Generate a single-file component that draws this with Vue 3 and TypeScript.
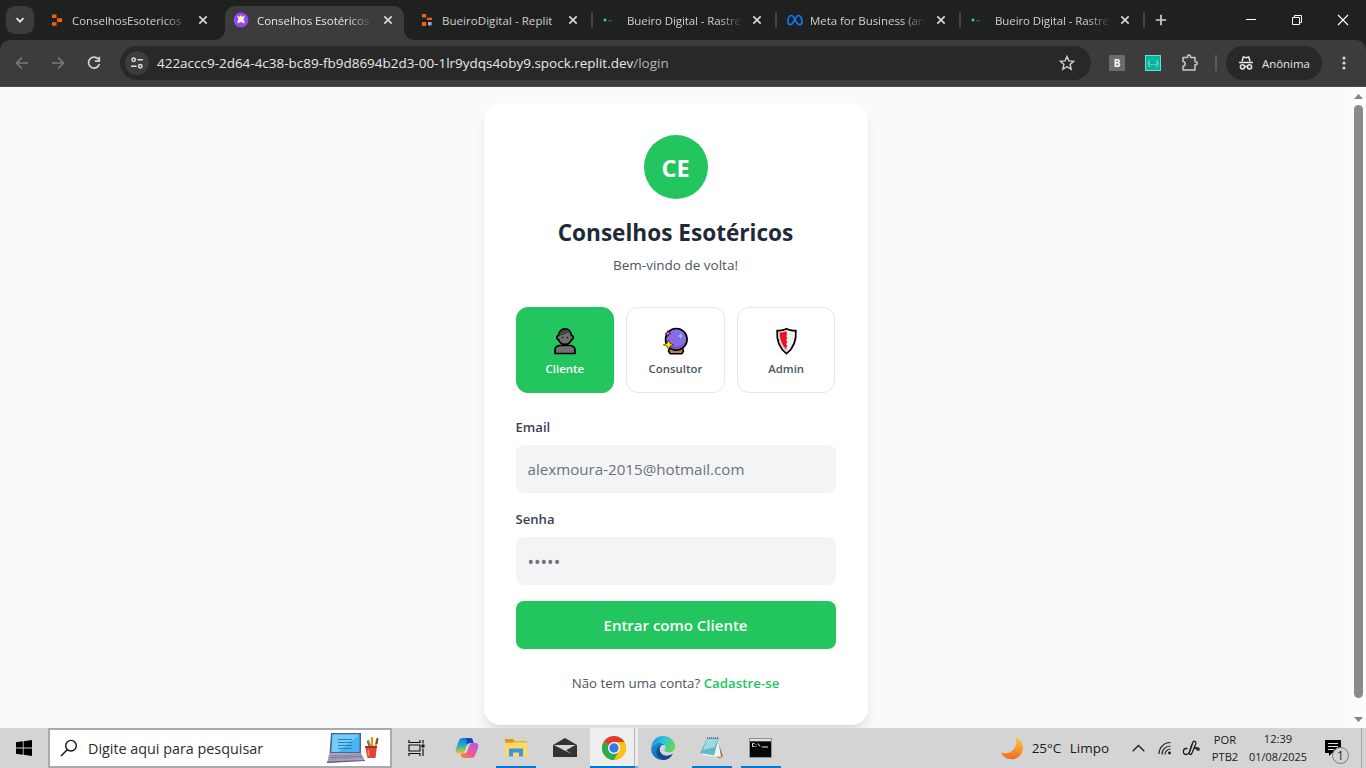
<script setup lang="ts">
import { ref } from 'vue'

type Favicon = 'replit' | 'mystic' | 'replit-app' | 'terminal' | 'meta'

interface Tab {
  title: string
  icon: Favicon
  active?: boolean
  divider?: boolean
}

const tabs: Tab[] = [
  { title: 'ConselhosEsotericos -', icon: 'replit' },
  { title: 'Conselhos Esotéricos', icon: 'mystic', active: true },
  { title: 'BueiroDigital - Replit', icon: 'replit-app', divider: true },
  { title: 'Bueiro Digital - Rastre', icon: 'terminal', divider: true },
  { title: 'Meta for Business (an', icon: 'meta', divider: true },
  { title: 'Bueiro Digital - Rastre', icon: 'terminal', divider: true },
]

const roles = ['Cliente', 'Consultor', 'Admin']
const role = ref('Cliente')
</script>

<template>
  <div class="screen">
    <header class="tabstrip">
      <div class="tab-search">
        <svg width="12" height="12" viewBox="0 0 12 12"><path d="M2.5 4.2 6 7.7l3.5-3.5" fill="none" stroke="#e6e6e6" stroke-width="1.8" /></svg>
      </div>
      <div v-for="(tab, i) in tabs" :key="i" class="tab" :class="[tab.icon, { active: tab.active, divider: tab.divider }]">
        <svg v-if="tab.icon === 'replit'" class="fav" viewBox="0 0 16 16">
          <path d="M3 2.500h4.500v3.500H3zM8 6.300h5v3.600H8zM3 10.200h4.500v3.600H3z" fill="#f26207" />
        </svg>
        <svg v-else-if="tab.icon === 'mystic'" class="fav" viewBox="0 0 16 16">
          <circle cx="8" cy="8" r="7.400" fill="#9747f0" />
          <path d="m8 3 1.200 1.800 2.600-1-1.200 3.200 1.300 4.500L8 9.900l-3.900 1.600L5.400 7 4.200 3.800l2.600 1z" fill="#fff0c2" />
        </svg>
        <svg v-else-if="tab.icon === 'replit-app'" class="fav" viewBox="0 0 16 16">
          <path d="M3 2h4.200v3.600H3zM8 5.800h5v2.200H8zM3 10h4.200v4H3z" fill="#f26207" />
          <rect x="9" y="10" width="3.6" height="3.4" fill="#a99cf5" />
        </svg>
        <svg v-else-if="tab.icon === 'terminal'" class="fav" viewBox="0 0 16 16">
          <circle cx="5" cy="8" r="1.500" fill="#35d46c" />
          <rect x="8" y="8" width="4" height="1.400" fill="#285c3b" />
        </svg>
        <svg v-else class="fav" viewBox="0 0 16 16">
          <path d="M.9 10.200C.9 6.500 2.400 3.500 4.400 3.500c3.200 0 4.500 9.100 8.100 9.100 1.800 0 2.500-1 2.500-2.700 0-3.500-1.600-6.400-3.500-6.400-3.100 0-4.900 9.100-8 9.100-1.700 0-2.600-1-2.600-2.400z" fill="none" stroke="#0a7cf7" stroke-width="1.700" />
        </svg>
        <span class="tab-title">{{ tab.title }}</span>
        <svg class="tab-close" width="10" height="10" viewBox="0 0 10 10"><path d="m1.300 1.300 7.400 7.400m0-7.400L1.300 8.700" stroke="#d6d6d6" stroke-width="1.700" /></svg>
      </div>
      <svg class="new-tab" width="12" height="12" viewBox="0 0 12 12"><path d="M6 .8v10.400M.8 6h10.400" stroke="#cfcfcf" stroke-width="1.700" /></svg>
      <div class="window-buttons">
        <svg width="12" height="12" viewBox="0 0 12 12"><path d="M1 5.500h10" stroke="#fff" /></svg>
        <svg width="12" height="12" viewBox="0 0 12 12"><path d="M1.500 3.500h7v7h-7zM3.500 3.500v-2h7v7h-2" fill="none" stroke="#fff" /></svg>
        <svg width="12" height="12" viewBox="0 0 12 12"><path d="m1 1 10 10M11 1 1 11" stroke="#fff" stroke-width="1.200" /></svg>
      </div>
    </header>

    <div class="toolbar-bed">
      <div class="toolbar">
        <svg class="nav dim" viewBox="0 0 16 16"><path d="M14 8H3m5-5.500L2.500 8 8 13.500" /></svg>
        <svg class="nav dim" viewBox="0 0 16 16"><path d="M2 8h11M8 2.500 13.500 8 8 13.500" /></svg>
        <svg class="nav" viewBox="0 0 16 16"><path d="M12.700 4.600A5.500 5.500 0 1 0 13.400 9M13.300 1.800v4.400H8.800" /></svg>
        <div class="omnibox">
          <span class="site-info">
            <svg width="14" height="14" viewBox="0 0 14 14" fill="none" stroke="#dedede" stroke-width="1.500"><circle cx="3.700" cy="3.800" r="1.700" /><path d="M7.500 3.800H13M1 10.200h5.500" /><circle cx="10.300" cy="10.200" r="1.700" /></svg>
          </span>
          <span class="url">422accc9-2d64-4c38-bc89-fb9d8694b2d3-00-1lr9ydqs4oby9.spock.replit.dev<span class="path">/login</span></span>
          <svg class="bookmark" width="16" height="16" viewBox="0 0 16 16"><path d="m8 1.500 1.900 4.400 4.800.4-3.600 3.200 1.100 4.700L8 11.700l-4.200 2.500 1.100-4.700L1.300 6.300l4.800-.4z" fill="none" stroke="#cfcfcf" stroke-width="1.400" /></svg>
        </div>
        <span class="ext ext-b">B</span>
        <span class="ext ext-json">{...}</span>
        <svg class="puzzle" width="18" height="18" viewBox="0 0 18 18"><path d="M2 3.500h4.500v-1a1.500 1.500 0 0 1 3 0v1H14v4.200h.7a1.500 1.500 0 0 1 0 3H14v5.300H2v-3.800c2.900-.2 2.900-4.600 0-4.800z" fill="none" stroke="#cbcbcb" stroke-width="1.500" stroke-linejoin="round" /></svg>
        <span class="bar"></span>
        <div class="incognito">
          <svg width="16" height="16" viewBox="0 0 16 16" fill="none" stroke="#e6e6e6" stroke-width="1.500"><path d="M4 6.300 5.300 2l2.700.8 2.700-.8L12 6.300M1 7.500h14" /><circle cx="4.500" cy="11.800" r="2.100" /><circle cx="11.500" cy="11.800" r="2.100" /><path d="M6.600 11.500h2.800" /></svg>
          <span>Anônima</span>
        </div>
        <svg class="menu" width="4" height="16" viewBox="0 0 4 16" fill="#d5d5d5"><circle cx="2" cy="3" r="1.600" /><circle cx="2" cy="8" r="1.600" /><circle cx="2" cy="13" r="1.600" /></svg>
      </div>
    </div>

    <div class="viewport">
      <main class="page">
        <section class="card">
          <div class="logo">CE</div>
          <h1>Conselhos Esotéricos</h1>
          <p class="welcome">Bem-vindo de volta!</p>
          <div class="roles">
            <button v-for="r in roles" :key="r" type="button" class="role" :class="{ selected: role === r }" @click="role = r">
              <svg v-if="r === 'Cliente'" class="emoji" viewBox="0 0 29 29">
                <path d="M5 26.500v-3c0-3.300 2-5 5.500-5h9c3.500 0 5.500 1.700 5.500 5v3z" fill="#6f6f6f" stroke="#000" stroke-width="1.700" />
                <path d="M8.700 8.500c0-4 2.600-6.600 6.300-6.600s6.300 2.600 6.300 6.600c2.600.2 2.600 3.900 0 4.200-.9 3-3.200 4.700-6.300 4.700s-5.400-1.700-6.300-4.700c-2.600-.3-2.600-4 0-4.200z" fill="#6f6f6f" stroke="#000" stroke-width="1.600" />
                <path d="M9.500 8.500c0-3.500 2.200-5.700 5.500-5.700 3 0 5.300 1.900 5.500 4.800L18 5.500 13 8z" fill="#434343" />
                <circle cx="12.600" cy="10.500" r=".8" /><circle cx="17.400" cy="10.500" r=".8" />
              </svg>
              <svg v-else-if="r === 'Consultor'" class="emoji" viewBox="0 0 29 29">
                <path d="M8.500 21h13l1 3.200-1.500 2.500H9l-1.500-2.500z" fill="#b77b51" stroke="#000" stroke-width="1.600" stroke-linejoin="round" />
                <circle cx="15.300" cy="12.300" r="10.800" fill="#886ce4" stroke="#000" stroke-width="1.600" />
                <path d="M6.500 17.500c4 3.200 13 3.500 18-2.700-1.400 5-5 7.500-9.400 7.500-3.600 0-7-1.600-8.600-4.800z" fill="#7358c4" />
                <path d="m19.500 6 .8 2.200 2.200.8-2.200.8-.8 2.200-.8-2.200-2.200-.8 2.200-.8z" fill="#62e5ff" />
                <path d="m7 3.500.7 2.200 2 .8-2 .8L7 9.500l-.8-2.200-2-.8 2-.8z" fill="#ff8abf" stroke="#27152d" stroke-width=".8" />
                <path d="m7.500 13 1.500 3.400 3.700 1.400L9 19.200l-1.500 3.400L6 19.200l-3.700-1.400L6 16.400z" fill="#ffe500" stroke="#221a00" stroke-width=".6" />
              </svg>
              <svg v-else class="emoji" viewBox="0 0 29 29">
                <path d="M14.500 1.700c2 1.200 5 1.900 9.300 2 .8 9.500-2.300 17.400-9.300 23-7-5.600-10.100-13.500-9.300-23 4.300-.1 7.300-.8 9.300-2z" fill="#efefef" stroke="#000" stroke-width="1.700" />
                <path d="M14.500 3c-2 1.200-4.500 1.700-8.100 1.900-.3 8.300 2 14.800 8.100 20.300z" fill="#d1d1d1" />
                <path d="M14.500 4c-2 1-3.900 1.500-6.800 1.800.1 7 2.200 12.200 6.800 16.700v-2.500l.9-1-.9-1v-2l.9-1-.9-1v-2l.9-1-.9-1v-2l.9-1-.9-1z" fill="#e81224" />
              </svg>
              <span>{{ r }}</span>
            </button>
          </div>
          <label>Email</label>
          <input class="email" type="text" placeholder="alexmoura-2015@hotmail.com" />
          <label>Senha</label>
          <input class="password" type="text" placeholder="•••••" />
          <button type="button" class="submit">Entrar como {{ role }}</button>
          <p class="signup"><span>Não tem uma conta?</span> <a>Cadastre-se</a></p>
        </section>
      </main>
      <div class="scrollbar">
        <svg width="9" height="5" viewBox="0 0 9 5"><path d="M4.500 0 9 5H0z" fill="#858585" /></svg>
        <i></i>
        <svg width="9" height="5" viewBox="0 0 9 5"><path d="M4.500 5 9 0H0z" fill="#858585" /></svg>
      </div>
    </div>

    <footer class="taskbar">
      <div class="start">
        <svg width="16" height="16" viewBox="0 0 16 16"><path d="M0 2.300 6.800 1.300v6.300H0zM7.600 1.200 16 0v7.600H7.600zM0 8.400h6.800v6.300L0 13.700zM7.600 8.400H16V16l-8.400-1.200z" /></svg>
      </div>
      <div class="search">
        <svg class="lens" width="18" height="18" viewBox="0 0 18 18" fill="none" stroke="#111" stroke-width="1.400"><circle cx="11" cy="6.700" r="5.300" /><path d="M7.200 10.700 1 17" /></svg>
        <span>Digite aqui para pesquisar</span>
        <svg class="laptop" width="54" height="32" viewBox="0 0 54 32">
          <path d="M5 1h30v20.500H3.500z" fill="#50648a" /><path d="M6.500 2.500h27v17.500H5.500z" fill="#48b4f4" /><path d="M6.500 2.500h27L12 20H5.500z" fill="#73cdfb" />
          <path d="M12 7.500h14M12 10.500h14M12 13.500h14M12 16.500h14" stroke="#2e7fba" />
          <path d="m3 22 32-1 4 7.500L1 31z" fill="#aaa2bd" /><path d="m4 23.500 30-1 2 3.500-33 1.500z" fill="#746e94" /><path d="m1 29.500 38-1.500v1L1 31z" fill="#655d80" />
          <path d="m4.500 24.500 29-1M3.500 26.500l31-1" stroke="#c7c1d4" stroke-dasharray="2 1" />
          <path d="m42 8 3 8M46 5v11m5-8-2 8" stroke="#d99b31" stroke-width="2.200" /><path d="m41.500 9 2 6" stroke="#248578" stroke-width="1.500" /><path d="m51.500 6-1 6" stroke="#884a1b" stroke-width="2" />
          <path d="M39 14h12l-1.500 12h-8z" fill="#e24538" /><path d="M39 14h12l-.4 2H39.500z" fill="#b82b29" /><path d="M42.500 17.500V24" stroke="#ff8270" stroke-width="1.500" />
        </svg>
      </div>
      <div class="app taskview">
        <svg width="17" height="16" viewBox="0 0 17 16" fill="none" stroke="#111" stroke-width="1.200"><path d="M1 0v2.500h11V0M1 5h11v6H1zM1 16v-2.500h11V16M15 0v3.500M15 8.500V16" /><path d="M13.500 6h3" stroke-width="3" /></svg>
      </div>
      <div class="app">
        <svg width="24" height="22" viewBox="0 0 24 22">
          <defs>
            <linearGradient id="copA" x1="0" y1="0" x2="0" y2="1"><stop offset="0" stop-color="#1675df" /><stop offset=".45" stop-color="#17b1c2" /><stop offset="1" stop-color="#e5cc20" /></linearGradient>
            <linearGradient id="copB" x1="1" y1="0" x2="0" y2="1"><stop offset="0" stop-color="#a45ef4" /><stop offset=".55" stop-color="#ef5790" /><stop offset="1" stop-color="#fb873c" /></linearGradient>
          </defs>
          <path d="M8 1h7c2 0 2.500 1 3 3l.6 2H15c-2 0-2.800 1-3.500 3l-2 5.500C9 16 8 16.500 6 16.500H4c-3 0-4-2-3-5L4 3.500C5 1.700 6 1 8 1z" fill="url(#copA)" />
          <path d="M11 1h4c2 0 2.500 1 3 3l.6 2H15c-1.500 0-2.500.8-3 2z" fill="#1548bf" />
          <path d="M16 21H9c-2 0-2.500-1-3-3l-.5-1.500H9c2 0 2.800-1 3.500-3l2-5.500c.5-1.500 1.500-2 3.500-2h2c3 0 4 2 3 5l-3 7.500c-1 1.800-2 2.500-4 2.500z" fill="url(#copB)" />
        </svg>
      </div>
      <div class="app open">
        <svg width="22" height="20" viewBox="0 0 22 20"><path d="M0 1h8l2 2h12v15H0z" fill="#eab02c" /><path d="M0 4.500h22V18H0z" fill="#ffd966" /><path d="M0 1h8l1.500 2L8 4.500H0z" fill="#d99b18" /><path d="M4 18.500v-8h14v8h-4v-4H8v4z" fill="#3996dc" /></svg>
      </div>
      <div class="app">
        <svg width="24" height="20" viewBox="0 0 24 20"><path d="M0 7 12 0l12 7v12H0z" fill="#333" /><path d="M1 7h21.500L13 12.200l6 3.800L10.500 12z" fill="#d6d6d6" /></svg>
      </div>
      <div class="app open current">
        <svg width="24" height="24" viewBox="0 0 24 24"><circle cx="12" cy="12" r="12" fill="#fbc116" /><path d="M12 12 1.600 6A12 12 0 0 1 22.400 6z" fill="#e33b2e" /><path d="M1.600 6A12 12 0 0 0 12 24l5.200-9z" fill="#2da94f" /><path d="M12 6h10.400A12 12 0 0 1 12 24l5.200-9z" fill="#fbc116" /><circle cx="12" cy="12" r="6" fill="#fff" /><circle cx="12" cy="12" r="4.700" fill="#3478e5" /></svg>
      </div>
      <div class="app">
        <svg width="24" height="24" viewBox="0 0 24 24">
          <defs>
            <linearGradient id="edgeT" x1="0" y1="0" x2="1" y2=".4"><stop offset="0" stop-color="#1689d5" /><stop offset=".55" stop-color="#31c5dc" /><stop offset="1" stop-color="#60d75a" /></linearGradient>
            <linearGradient id="edgeB" x1="0" y1="0" x2="1" y2="1"><stop offset="0" stop-color="#1692dd" /><stop offset="1" stop-color="#1450a0" /></linearGradient>
          </defs>
          <path d="M.3 11C1 4.500 6 0 12 0c7 0 12 5 12 10.500 0 3.500-2.500 5.800-6 5.800-2.500 0-4.600-.8-4.600-2 0-.8 1.100-1.300 1.100-3C14.500 8.500 11.500 7 8.500 7 4.500 7 1.500 8.500.3 11z" fill="url(#edgeT)" />
          <path d="M.2 12C1 9 4.500 7 8.500 7c2.300 0 4.300.8 5.200 2.300C10.500 8.500 8.500 10.500 8.500 13c0 4.500 4.500 8 9.500 6.500 1.500-.5 2.800-1 3.800-1.500C19.500 22 16 24 12 24 5.400 24-.4 19 .2 12z" fill="url(#edgeB)" />
          <path d="M8.500 13c0 4.500 4.500 8 9.500 6.500 1.500-.5 2.800-1 3.800-1.500-2 3.500-5 5.500-8.800 6C8 23 5.500 19.500 5.500 16c0-3 1.500-5.500 5-6.500-1.300.8-2 2-2 3.500z" fill="#114a8b" />
        </svg>
      </div>
      <div class="app open">
        <svg width="24" height="22" viewBox="0 0 24 22"><path d="m17 2 6 17-3 2.500-4-2z" fill="#9b784c" /><path d="m7 1 11 1 3 18-19-2z" fill="#eef5f5" /><path d="M7 1h12l-5 17.500L0 16z" fill="#67b8c6" /><path d="M7 2h11l-3 8L3 13z" fill="#9ed9df" /><path d="M7 1h12" stroke="#51666b" stroke-width="1.500" stroke-dasharray="1 1" /></svg>
      </div>
      <div class="app open">
        <svg width="23" height="20" viewBox="0 0 23 20"><path d="M0 0h23v20H0z" fill="#8e9499" /><path d="M1 1h21v2H1z" fill="#d6e0e7" /><path d="M1 3.500h21V19H1z" fill="#050505" /><path d="M5.500 5.500H3.500v3h2M7 6v.8M7 8v.8M9 5.500l2 3M13 9h6" fill="none" stroke="#e5e5e5" /></svg>
      </div>

      <div class="tray">
        <svg width="24" height="24" viewBox="0 0 24 24"><defs><linearGradient id="moon" x1="0" y1="0" x2="0" y2="1"><stop offset="0" stop-color="#f8ce4c" /><stop offset="1" stop-color="#ee6c1e" /></linearGradient></defs><path d="M15.500 1A11.500 11.500 0 1 1 1 16.500c5 1.800 9.500.5 12.500-3C16.500 10 17 5.500 15.500 1z" fill="url(#moon)" /></svg>
        <span class="weather">25°C</span>
        <span class="weather">Limpo</span>
        <svg class="chev" width="13" height="8" viewBox="0 0 13 8"><path d="M.7 7.200 6.500 1.400l5.800 5.800" fill="none" stroke="#222" stroke-width="1.400" /></svg>
        <svg width="14" height="14" viewBox="0 0 14 14" fill="none" stroke="#222" stroke-width="1.200"><path d="M1 13C1 6.500 6 1.500 12.500 1.500M4 13.500C4 8.500 7.500 5 12.500 5M7 13.500C7 10.500 9.500 8 12.500 8" /><circle cx="11.500" cy="12" r="1.400" fill="#111" stroke="none" /></svg>
        <svg width="18" height="18" viewBox="0 0 18 18" fill="none" stroke="#1c1c1c" stroke-width="1.300"><path d="M5.500 9.500H4c-3.200 0-3.700 6 0 6 2.500 0 3.500-2 4.500-5l2.300-7c.8-2.300 3.800-1.200 3 1.200L10 14c-.8 2.300-3.500 1.800-2.700-.7L10 5M12 9h4c1.500 0 1.500 2.500-.3 2.200L12.500 8" /></svg>
        <div class="stack lang"><span>POR</span><span>PTB2</span></div>
        <div class="stack clock"><span>12:39</span><span class="date">01/08/2025</span></div>
        <div class="notif">
          <svg width="16" height="16" viewBox="0 0 16 16"><path d="M0 0h16v13H7l-3 3v-3H0z" /><path d="M3 3.500h10M3 6.500h10M3 9.500h6" stroke="#ddd" /></svg>
          <b>1</b>
        </div>
      </div>
      <i class="peek"></i>
    </footer>
  </div>
</template>

<style>
body {
  margin: 0;
  overflow: hidden;
}
</style>

<style scoped>
* {
  box-sizing: border-box;
}
.screen {
  width: 1366px;
  height: 768px;
  display: flex;
  flex-direction: column;
  overflow: hidden;
  font-family: 'Open Sans', 'Noto Sans', sans-serif;
  background: #1f2120;
}
svg {
  display: block;
  flex: none;
}
.tabstrip {
  height: 40px;
  display: flex;
  align-items: center;
  background: #1f2120;
}
.tab-search {
  width: 28px;
  height: 28px;
  margin-left: 6px;
  padding: 8px;
  border-radius: 9px;
  background: #3c3c3c;
}
.tab-search + .tab {
  margin-left: 6px;
}
.tab {
  position: relative;
  width: 184px;
  height: 40px;
  flex: none;
  padding-left: 9px;
  display: flex;
  align-items: center;
}
.fav {
  width: 16px;
  height: 16px;
}
.tab-title {
  width: 116px;
  margin-left: 7px;
  padding-top: 1px;
  overflow: hidden;
  white-space: nowrap;
  font-size: 11.5px;
  line-height: 20px;
  letter-spacing: -0.05px;
  color: #d0d0d0;
  mask-image: linear-gradient(to right, #000 80%, transparent);
}
.replit-app,
.meta {
  padding-left: 11px;
}
.replit-app .tab-title {
  letter-spacing: 0.05px;
  mask-image: none;
}
.terminal .fav {
  margin-left: -1px;
}
.terminal .tab-title {
  margin-left: 11px;
  letter-spacing: -0.1px;
}
.tab-close {
  margin-left: 10px;
}
.terminal .tab-close {
  margin-left: 9px;
}
.tab.active .tab-close {
  margin-left: 11px;
}
.tab.active {
  z-index: 1;
}
.tab.active::before {
  content: '';
  position: absolute;
  z-index: -1;
  inset: 6px 4px 0 1px;
  border-radius: 10px 10px 0 0;
  background: #3c3c3c;
}
.tab.active::after {
  content: '';
  position: absolute;
  z-index: -2;
  left: -9px;
  right: -6px;
  bottom: 0;
  height: 10px;
  background:
    radial-gradient(circle at 0 0, transparent 9.5px, #3c3c3c 10px) left / 10px 10px no-repeat,
    radial-gradient(circle at 100% 0, transparent 9.5px, #3c3c3c 10px) right / 10px 10px no-repeat;
}
.tab.active .tab-title {
  margin-left: 8px;
  width: 115px;
  color: #e6e6e6;
}
.tab.divider::after {
  content: '';
  position: absolute;
  right: -1px;
  top: 12px;
  width: 2px;
  height: 16px;
  background: #434443;
}
.new-tab {
  margin-left: 11px;
}
.window-buttons {
  margin: 0 17px 0 auto;
  display: flex;
  gap: 34px;
}
.toolbar-bed {
  height: 47px;
  background: #1f2120;
}
.toolbar {
  height: 47px;
  padding-left: 14px;
  display: flex;
  align-items: center;
  background: #3c3c3c;
  border-bottom: 1px solid #4a4a4a;
  border-radius: 10px 10px 0 0;
}
.nav {
  width: 16px;
  height: 16px;
  margin-right: 20px;
  fill: none;
  stroke: #d0d0d0;
  stroke-width: 1.7;
}
.nav.dim {
  stroke: #7b7b7b;
}
.omnibox {
  width: 971px;
  height: 34px;
  margin-left: -2px;
  padding: 0 16px 0 5px;
  display: flex;
  align-items: center;
  border-radius: 17px;
  background: #282828;
}
.site-info {
  width: 24px;
  height: 24px;
  padding: 5px;
  border-radius: 50%;
  background: #3c3c3c;
}
.url {
  margin-left: 8px;
  white-space: nowrap;
  font-size: 13.48px;
  color: #e8e8e8;
}
.path {
  color: #b5b5b5;
}
.bookmark {
  margin-left: auto;
}
.ext {
  width: 16px;
  height: 16px;
  margin-left: 18px;
  text-align: center;
  line-height: 16px;
}
.ext-b {
  border-radius: 1px;
  background: #6c6c6c;
  color: #fff;
  font-size: 10px;
  font-weight: 700;
}
.ext-json {
  margin-left: 20px;
  border: 1px solid #68e0cf;
  background: #08b49f;
  color: #d8fff8;
  font-size: 7px;
  line-height: 13px;
}
.puzzle {
  margin-left: 20px;
}
.bar {
  width: 2px;
  height: 16px;
  margin-left: 16px;
  background: #5b5b5b;
}
.incognito {
  width: 96px;
  height: 34px;
  margin-left: 9px;
  padding-left: 12px;
  display: flex;
  align-items: center;
  gap: 8px;
  border-radius: 17px;
  background: #282828;
  color: #e6e6e6;
  font-size: 11.4px;
}
.menu {
  margin-left: 20px;
}
.viewport {
  height: 641px;
  display: flex;
  background: #f9fafc;
}
.page {
  flex: 1;
  padding-top: 16px;
  overflow: hidden;
}
.card {
  width: 384px;
  height: 622px;
  margin: 0 auto;
  padding: 32px;
  border-radius: 16px;
  background: #fff;
  box-shadow: 0 10px 15px -3px rgba(0, 0, 0, 0.1), 0 4px 6px -4px rgba(0, 0, 0, 0.1);
}
.logo {
  width: 64px;
  height: 64px;
  margin: 0 auto 16px;
  border-radius: 50%;
  background: #22c55e;
  color: #fff;
  text-align: center;
  font-size: 23.5px;
  font-weight: 700;
  line-height: 66px;
}
h1 {
  height: 32px;
  margin: 0 0 8px;
  text-align: center;
  white-space: nowrap;
  font-size: 22.6px;
  font-weight: 700;
  line-height: 36px;
  color: #1f2937;
}
.welcome {
  margin: 0 0 32px;
  text-align: center;
  font-size: 13.5px;
  line-height: 20px;
  color: #4b5563;
}
.roles {
  display: grid;
  grid-template-columns: repeat(3, 1fr);
  gap: 12px;
  margin-bottom: 24px;
}
.role {
  height: 86px;
  padding: 17px 0 0;
  display: flex;
  flex-direction: column;
  align-items: center;
  border: 1px solid #e5e7eb;
  border-radius: 12px;
  background: #fff;
  font-family: inherit;
  font-size: 11.4px;
  font-weight: 600;
  line-height: 16px;
  color: #4b5563;
}
.role.selected {
  border-color: #22c55e;
  background: #22c55e;
  color: #fff;
}
.emoji {
  width: 29px;
  height: 29px;
  margin: 2px 0 5px;
}
label {
  display: block;
  margin-bottom: 8px;
  font-size: 13.1px;
  font-weight: 600;
  line-height: 20px;
  color: #374151;
}
input {
  display: block;
  width: 320px;
  height: 48px;
  margin: 0 0 16px;
  padding: 0 12px 1px;
  border: 0;
  border-radius: 8px;
  background: #f3f4f6;
  font-family: inherit;
  font-size: 15.15px;
}
input::placeholder {
  color: #6b7280;
  opacity: 1;
}
.password {
  padding: 1px 12px 0;
  font-size: 17.4px;
}
.submit {
  display: block;
  width: 320px;
  height: 48px;
  margin: 0 0 24px;
  padding: 0 0 1px;
  border: 0;
  border-radius: 8px;
  background: #22c55e;
  color: #fff;
  font-family: inherit;
  font-size: 15px;
  font-weight: 600;
}
.signup {
  margin: 0;
  text-align: center;
  white-space: nowrap;
  font-size: 13.3px;
  line-height: 20px;
  color: #4b5563;
}
.signup a {
  font-weight: 600;
  color: #22c55e;
}
.scrollbar {
  width: 15px;
  padding: 7px 0 6px;
  display: flex;
  flex-direction: column;
  align-items: center;
  background: #fcfcfc;
}
.scrollbar i {
  width: 9px;
  height: 593px;
  margin: 6px 0 auto;
  border-radius: 5px;
  background: #8b8b8b;
}
.taskbar {
  height: 40px;
  display: flex;
  background: #d4d4d4;
  color: #1a1a1a;
}
.start {
  width: 48px;
  padding: 12px 16px;
}
.search {
  width: 344px;
  height: 40px;
  padding-left: 10px;
  display: flex;
  align-items: center;
  border: 2px solid #aaaaac;
  background: #fff;
  font-size: 14.35px;
  color: #2b2b2b;
}
.search span {
  margin-left: 10px;
  white-space: nowrap;
}
.laptop {
  margin: 0 10px 0 auto;
}
.app {
  width: 49px;
  position: relative;
  display: flex;
  align-items: center;
  justify-content: center;
}
.taskview {
  width: 50px;
  padding-right: 2px;
}
.app.open::after {
  content: '';
  position: absolute;
  left: 5px;
  right: 4px;
  bottom: 0;
  height: 2px;
  background: #0078d7;
}
.app.current {
  background: linear-gradient(to right, transparent 1px, #eeeeee 1px 45px, #b8b8b8 45px 46px, #ececec 46px);
}
.app.current::after {
  left: 1px;
  right: 0;
  background: linear-gradient(to right, #0078d7 45px, #71b1e4 45px);
}
.tray {
  margin: 0 0 0 auto;
  display: grid;
  grid-template-columns: 24px 45px 41px 44px 21px 32px 36px 70px 40px;
  align-items: center;
  justify-items: center;
}
.weather {
  font-size: 13.5px;
}
.chev {
  justify-self: start;
  margin-left: 22px;
}
.stack {
  display: flex;
  flex-direction: column;
  align-items: center;
  font-size: 11.2px;
  line-height: 17px;
}
.clock {
  padding-bottom: 1px;
  line-height: 18px;
}
.date {
  font-size: 10.9px;
}
.notif {
  width: 24px;
  height: 24px;
  position: relative;
  padding: 4px 0 0 4px;
}
.notif b {
  position: absolute;
  left: 11px;
  top: 11px;
  width: 17px;
  height: 17px;
  border: 1px solid #777;
  border-radius: 50%;
  background: #d2d2d2;
  text-align: center;
  font-size: 12px;
  font-weight: 400;
  line-height: 15px;
}
.peek {
  width: 5px;
  margin-left: 8px;
  border-left: 1px solid #a5a5a5;
}
</style>
